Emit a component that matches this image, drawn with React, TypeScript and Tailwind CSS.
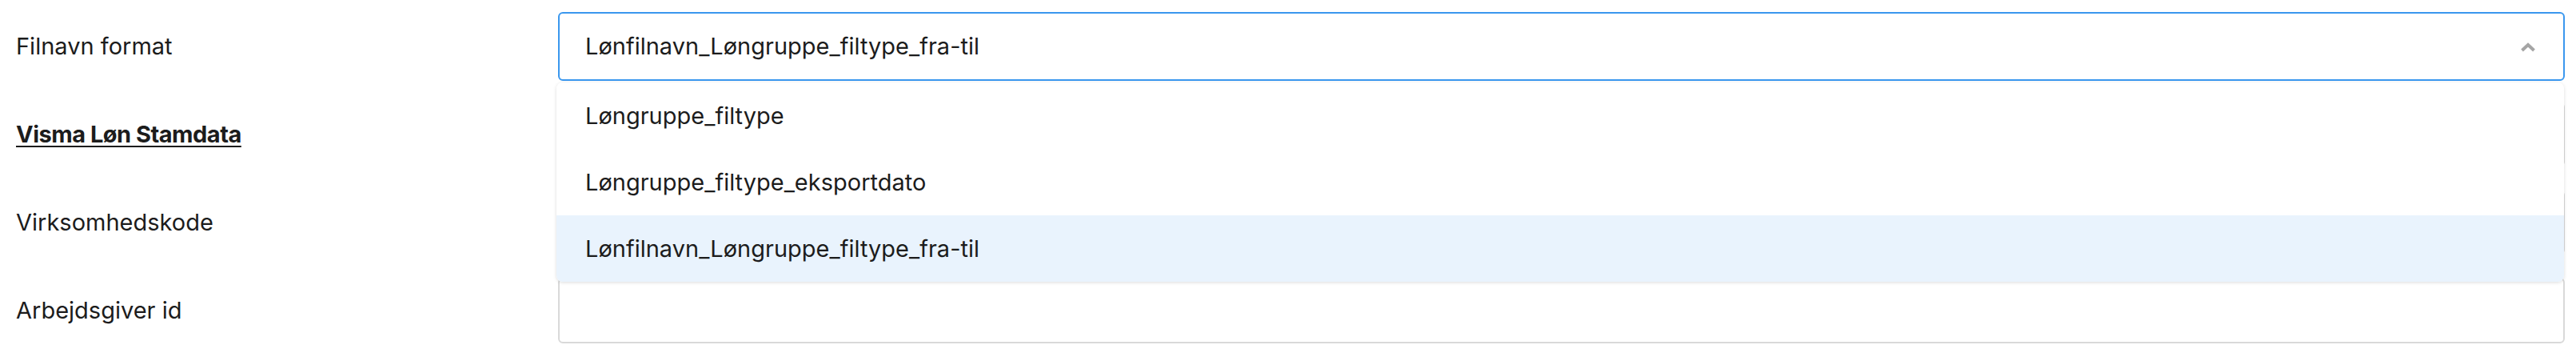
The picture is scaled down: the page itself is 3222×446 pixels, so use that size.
import React from "react";

const options = [
  "Løngruppe_filtype",
  "Løngruppe_filtype_eksportdato",
  "Lønfilnavn_Løngruppe_filtype_fra-til",
];

function Row({ label, children, bold }: { label: string; children?: React.ReactNode; bold?: boolean }) {
  return (
    <div className="flex items-center h-[110px]">
      <div className={"w-[698px] shrink-0 pl-[20px] " + (bold ? "font-bold tracking-[-0.5px] underline decoration-[2px] underline-offset-[4px]" : "")}>
        {label}
      </div>
      <div className="w-[2510px] shrink-0">{children}</div>
    </div>
  );
}

export default function App() {
  return (
    <div className="w-[3222px] h-[446px] bg-white overflow-hidden pt-[3px] text-[29px] text-[#1c1c1c] font-['Inter',sans-serif]">
      <Row label="Filnavn format">
        <div className="relative">
          <div className="h-[86px] border-[2.5px] border-[#3a97ee] rounded-[6px] flex items-center justify-between pl-[32px] pr-[34px] bg-white">
            <span>Lønfilnavn_Løngruppe_filtype_fra-til</span>
            <svg width="20" height="12" viewBox="0 0 20 12" className="mt-[2px]">
              <polyline points="2.5,10 10,3 17.5,10" fill="none" stroke="#a5a5a5" strokeWidth="4" strokeLinejoin="miter" />
            </svg>
          </div>
          <div className="absolute left-[-2px] top-[88px] w-[2511px] z-10 bg-white rounded-[8px] shadow-[0_1px_4px_rgba(0,0,0,0.14)] overflow-hidden">
            {options.map((o, i) => (
              <div
                key={o}
                className={"h-[83px] flex items-center pl-[36px] " + (i === 2 ? "bg-[#e9f3fd]" : "bg-white")}
              >
                {o}
              </div>
            ))}
          </div>
        </div>
      </Row>
      <Row label="Visma Løn Stamdata" bold>
        <div className="h-[80px] border-[2px] border-[#d9d9d9] rounded-[6px]" />
      </Row>
      <Row label="Virksomhedskode">
        <div className="h-[80px] border-[2px] border-[#d9d9d9] rounded-[6px]" />
      </Row>
      <Row label="Arbejdsgiver id">
        <div className="h-[82px] border-[2px] border-[#d9d9d9] rounded-[6px]" />
      </Row>
    </div>
  );
}
